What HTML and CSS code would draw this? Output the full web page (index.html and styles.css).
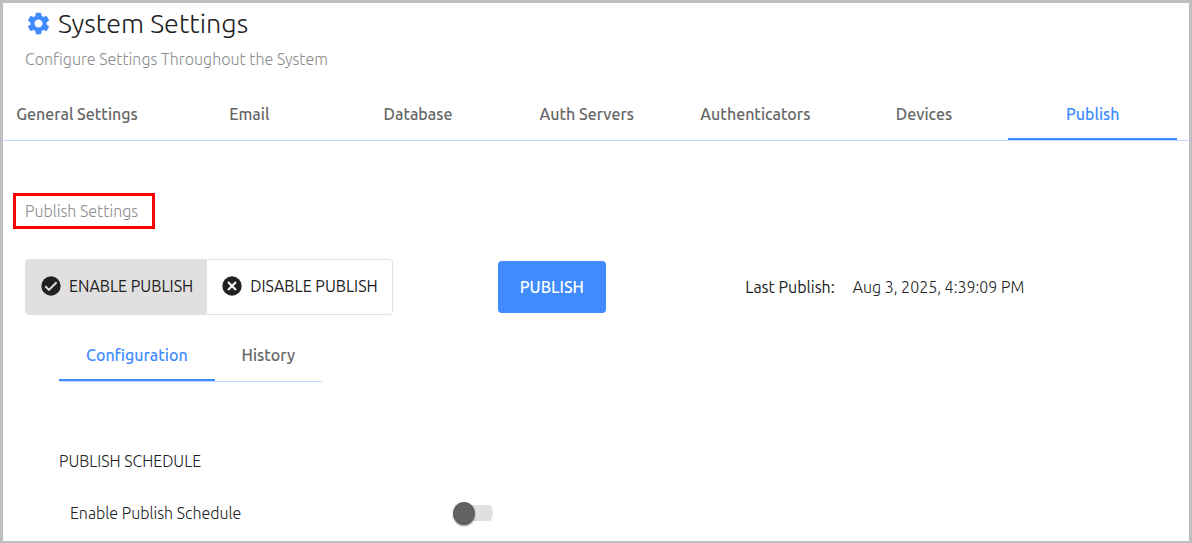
FILE: index.html
```html
<!DOCTYPE html>
<html lang="en">

<head>
    <meta charset="UTF-8">
    <meta name="viewport" content="width=device-width, initial-scale=1.0">
    <title>System Settings</title>
    <link rel="stylesheet" href="styles.css">
</head>

<body>
    <main class="page">
        <!-- Page heading -->
        <header class="page-header">
            <h1>
                <svg class="gear" viewBox="0 0 24 24" aria-hidden="true">
                    <path d="M19.14 12.94c.04-.3.06-.61.06-.94s-.02-.64-.07-.94l2.03-1.58c.18-.14.23-.41.12-.61l-1.92-3.32c-.12-.22-.37-.29-.59-.22l-2.39.96c-.5-.38-1.03-.7-1.62-.94L14.4 2.81c-.04-.24-.24-.41-.48-.41h-3.84c-.24 0-.43.17-.47.41l-.36 2.54c-.59.24-1.13.57-1.62.94l-2.39-.96c-.22-.08-.47 0-.59.22L2.74 8.87c-.12.21-.08.47.12.61l2.03 1.58c-.05.3-.09.63-.09.94s.02.64.07.94l-2.03 1.58c-.18.14-.23.41-.12.61l1.92 3.32c.12.22.37.29.59.22l2.39-.96c.5.38 1.03.7 1.62.94l.36 2.54c.05.24.24.41.48.41h3.84c.24 0 .44-.17.47-.41l.36-2.54c.59-.24 1.13-.56 1.62-.94l2.39.96c.22.08.47 0 .59-.22l1.92-3.32c.12-.22.07-.47-.12-.61l-2.01-1.58zM12 15.6c-1.98 0-3.6-1.62-3.6-3.6s1.62-3.6 3.6-3.6 3.6 1.62 3.6 3.6-1.62 3.6-3.6 3.6z"/>
                </svg>
                System Settings
            </h1>
            <p class="subtitle">Configure Settings Throughout the System</p>
        </header>

        <!-- Main tabs -->
        <nav class="tabs">
            <a href="#general" class="tab tab-first">General Settings</a>
            <a href="#email" class="tab">Email</a>
            <a href="#database" class="tab">Database</a>
            <a href="#auth-servers" class="tab">Auth Servers</a>
            <a href="#authenticators" class="tab">Authenticators</a>
            <a href="#devices" class="tab">Devices</a>
            <a href="#publish" class="tab active" aria-current="page">Publish</a>
        </nav>

        <section class="content">
            <h2 class="section-title">Publish Settings</h2>

            <!-- Publish state and manual publish -->
            <div class="publish-row">
                <div class="toggle-group">
                    <button type="button" class="toggle selected" aria-pressed="true">
                        <svg class="icon" viewBox="0 0 20 20" aria-hidden="true">
                            <circle cx="10" cy="10" r="9.7" fill="#212121"/>
                            <path d="M4.3 10.2l3.7 3.7 7.6-7.6" fill="none" stroke="#e0e0e0" stroke-width="2"/>
                        </svg>
                        ENABLE PUBLISH
                    </button>
                    <button type="button" class="toggle" aria-pressed="false">
                        <svg class="icon" viewBox="0 0 20 20" aria-hidden="true">
                            <circle cx="10" cy="10" r="9.7" fill="#212121"/>
                            <path d="M6 6l8 8M14 6l-8 8" fill="none" stroke="#fff" stroke-width="2"/>
                        </svg>
                        DISABLE PUBLISH
                    </button>
                </div>
                <div>
                    <button type="button" class="publish-btn">PUBLISH</button>
                </div>
                <div class="last-publish">
                    <span class="last-label">Last Publish:</span>
                    <span>Aug 3, 2025, 4:39:09 PM</span>
                </div>
            </div>

            <div class="panel">
                <nav class="sub-tabs">
                    <a href="#configuration" class="sub-tab active">Configuration</a>
                    <a href="#history" class="sub-tab">History</a>
                </nav>

                <h3 class="group-title">PUBLISH SCHEDULE</h3>
                <div class="setting">
                    <label for="schedule">Enable Publish Schedule</label>
                    <input type="checkbox" role="switch" id="schedule" class="switch">
                </div>
            </div>
        </section>
    </main>
</body>

</html>
```
FILE: styles.css
```css
* {
    padding: 0;
    margin: 0;
    box-sizing: border-box;
}

body {
    font-family: Ubuntu, "Open Sans", "Noto Sans", sans-serif;
    font-size: 16px;
    font-weight: 300;
    line-height: 20px;
    color: #212121;
    background-color: #fff;
}

button {
    font-family: inherit;
    font-size: 16px;
    line-height: 20px;
    color: #212121;
    cursor: pointer;
}

a {
    text-decoration: none;
}

.page {
    min-height: 100vh;
    border: 3px solid #bfbfbf;
    border-bottom-width: 2px;
}

.page-header {
    padding: 4px 22px 0;
}

.page-header h1 {
    display: flex;
    align-items: center;
    gap: 6px;
    font-size: 27px;
    font-weight: 300;
    line-height: 32px;
}

.gear {
    width: 27px;
    height: 27px;
    fill: #408cff;
}

.subtitle {
    margin-top: 10px;
    color: #8c8c8c;
}

.tabs {
    display: flex;
    margin-top: 19px;
    padding-right: 12px;
    border-bottom: 1px solid #c2dbff;
}

.tab,
.sub-tab {
    font-weight: 500;
    text-align: center;
    white-space: nowrap;
    color: #666;
    border-bottom: 2px solid transparent;
}

.tab {
    flex: 1;
    padding: 16px 0 14px;
}

.tab-first {
    flex: 0 0 148px;
    margin-right: 14px;
}

.tab.active,
.sub-tab.active {
    color: #408cff;
    border-bottom-color: #408cff;
}

.content {
    padding: 52px 10px 12px;
}

.section-title {
    width: fit-content;
    padding: 5px 14px 5px 9px;
    border: 3px solid #f00;
    font-size: 16px;
    font-weight: 300;
    line-height: 20px;
    color: #8c8c8c;
}

.publish-row {
    display: grid;
    grid-template-columns: 472fr 247fr 433fr;
    align-items: center;
    margin-top: 30px;
    padding-left: 12px;
}

.toggle-group {
    display: flex;
    width: fit-content;
    border: 1px solid #e0e0e0;
    border-radius: 4px;
    overflow: hidden;
}

.toggle {
    display: flex;
    align-items: center;
    gap: 8px;
    height: 54px;
    padding: 0 14px 2px 15px;
    border: none;
    background-color: #fff;
    white-space: nowrap;
}

.toggle.selected {
    background-color: #e0e0e0;
}

.icon {
    width: 20px;
    height: 20px;
}

.publish-btn {
    height: 52px;
    padding: 0 22px;
    border: none;
    border-radius: 4px;
    background-color: #408cff;
    font-weight: 500;
    color: #fff;
}

.last-publish {
    display: flex;
    gap: 18px;
    white-space: nowrap;
}

.last-label {
    font-weight: 400;
}

.panel {
    padding: 20px 46px 0;
}

.sub-tabs {
    display: flex;
    width: fit-content;
    border-bottom: 1px solid #c2dbff;
}

.sub-tab {
    padding: 10px 27px 14px;
}

.group-title {
    margin-top: 69px;
    font-size: 16px;
    font-weight: 300;
    line-height: 20px;
}

.setting {
    display: grid;
    grid-template-columns: 385fr 684fr;
    align-items: center;
    margin-top: 30px;
    padding-left: 11px;
}

.switch {
    appearance: none;
    display: flex;
    align-items: center;
    width: 40px;
    height: 24px;
    background: linear-gradient(#e0e0e0, #e0e0e0) right center / 36px 16px no-repeat;
    border-radius: 12px;
    cursor: pointer;
}

.switch::before {
    content: "";
    width: 22px;
    height: 23px;
    border-radius: 50%;
    background-color: #616161;
    box-shadow: 0 1px 2px rgba(0, 0, 0, 0.4);
}

.switch:checked {
    justify-content: flex-end;
}

.switch:checked::before {
    background-color: #408cff;
}
```
